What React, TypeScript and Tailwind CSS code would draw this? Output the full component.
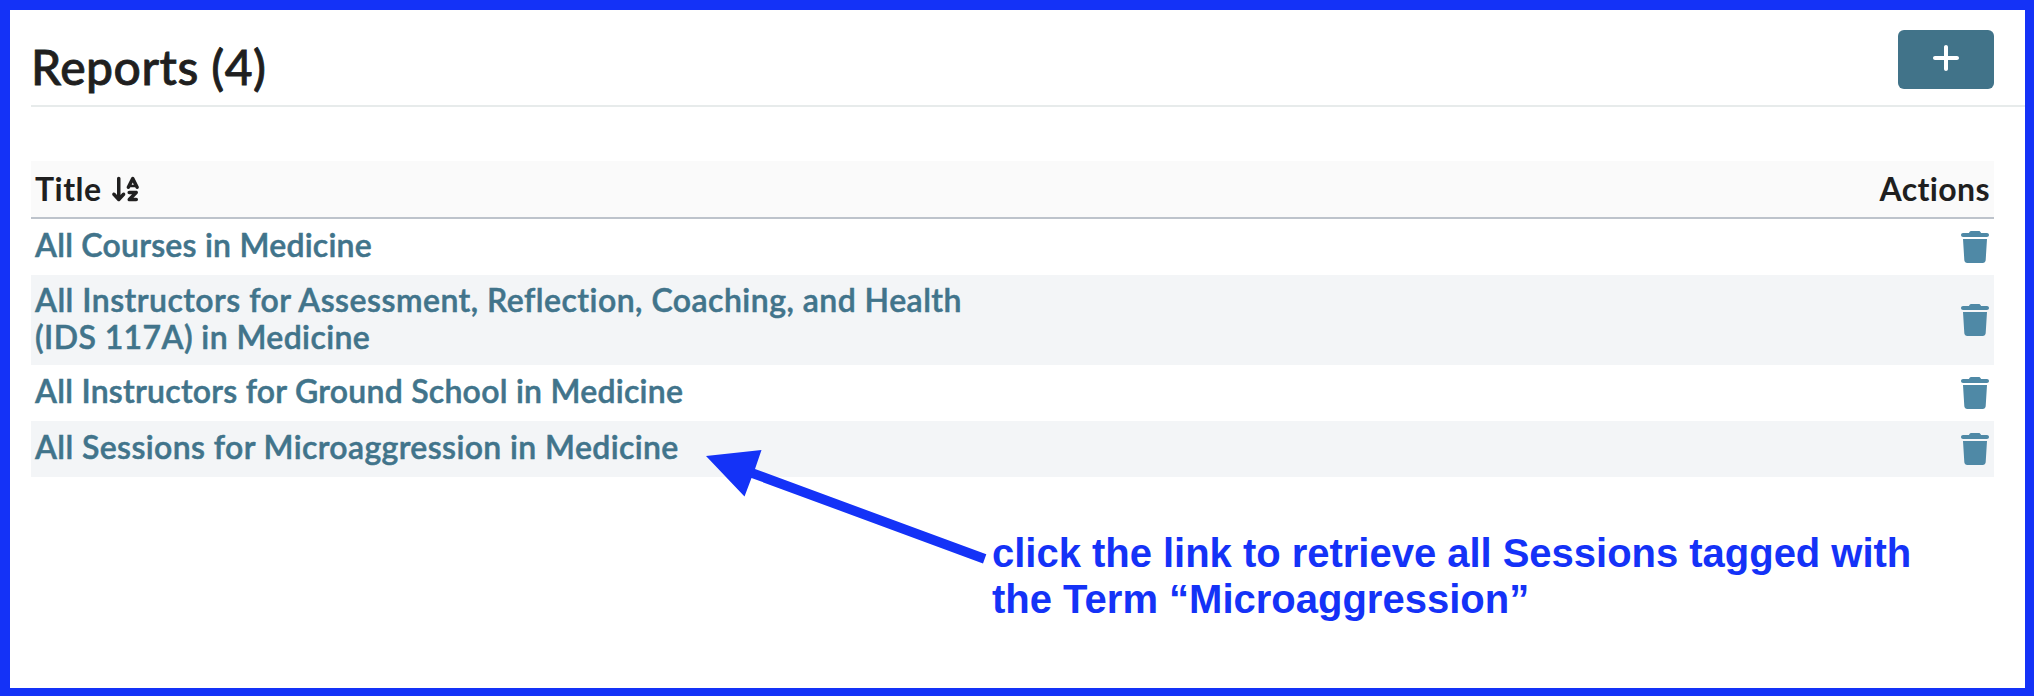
import { FaArrowDownAZ, FaPlus, FaTrash } from "react-icons/fa6";

interface Report {
  lines: { text: string; tracking: string }[];
  row: string;
  link: string;
}

const reports: Report[] = [
  {
    lines: [{ text: "All Courses in Medicine", tracking: "tracking-[0.23px]" }],
    row: "h-[56px] bg-white",
    link: "mt-[7px]",
  },
  {
    lines: [
      {
        text: "All Instructors for Assessment, Reflection, Coaching, and Health",
        tracking: "tracking-[0.47px]",
      },
      { text: "(IDS 117A) in Medicine", tracking: "tracking-[0.4px]" },
    ],
    row: "h-[90px] bg-[#f3f5f7]",
    link: "mt-[6px]",
  },
  {
    lines: [{ text: "All Instructors for Ground School in Medicine", tracking: "tracking-[0.25px]" }],
    row: "h-[56px] bg-white",
    link: "mt-[7px]",
  },
  {
    lines: [{ text: "All Sessions for Microaggression in Medicine", tracking: "tracking-[0.38px]" }],
    row: "h-[56px] bg-[#f3f5f7]",
    link: "mt-[7px]",
  },
];

function ReportRow({ report }: { report: Report }) {
  return (
    <li className={`flex justify-between pr-[5px] pl-[4px] ${report.row}`}>
      <a
        className={`text-[32px] leading-[37px] font-semibold whitespace-nowrap text-[#41748b] [-webkit-text-stroke:0.5px_#41748b] ${report.link}`}
      >
        {report.lines.map((line) => (
          <span key={line.text} className={`block ${line.tracking}`}>
            {line.text}
          </span>
        ))}
      </a>
      <button className="flex items-center" aria-label="Delete">
        <FaTrash className="h-8 w-7 text-[#4f89a6]" />
      </button>
    </li>
  );
}

export default function App() {
  return (
    <div className="relative h-[696px] w-[2034px] overflow-hidden border-t-[10px] border-r-[9px] border-b-[8px] border-l-[10px] border-[#1432f7] bg-white font-[Lato,sans-serif] text-[#201f1f]">
      <header className="ml-[21px] flex h-[97px] justify-between border-b-2 border-[#e7ebeb] pr-[31px]">
        <h1 className="mt-[29px] text-[48px] leading-[56px] font-medium tracking-[0.5px] [-webkit-text-stroke:0.8px_#201f1f]">
          Reports (4)
        </h1>
        <button
          className="mt-[20px] flex h-[59px] w-[96px] justify-center rounded-[6px] bg-[#417389] pt-[12px] text-white"
          aria-label="Add"
        >
          <FaPlus className="h-8 w-7" />
        </button>
      </header>

      <main className="mt-[54px] mr-[31px] ml-[21px]">
        <div className="flex h-[58px] justify-between border-b-2 border-[#bdc3cb] bg-[#fafafa] pt-[9px] pr-[4px] pl-[4px] text-[32px] leading-[37px] font-bold">
          <div className="flex">
            <span className="tracking-[0.5px]">Title</span>
            <FaArrowDownAZ className="mt-[5px] ml-[8px] h-[28px] w-[31.5px]" />
          </div>
          <span className="tracking-[0.4px]">Actions</span>
        </div>
        <ul>
          {reports.map((report) => (
            <ReportRow key={report.lines[0].text} report={report} />
          ))}
        </ul>
      </main>

      <svg
        className="absolute top-[430px] left-[690px] h-[140px] w-[300px]"
        viewBox="700 440 300 140"
        fill="#1432f7"
      >
        <path d="M706 456 L761.5 450 L755 469 L986.3 554.3 L983 563.5 L751.5 478 L744.5 496.5 Z" />
      </svg>
      <p className="absolute top-[520px] left-[982px] font-['Liberation_Sans',sans-serif] text-[40px] leading-[46px] font-bold whitespace-nowrap text-[#1432f7]">
        <span className="block tracking-[-0.02px]">click the link to retrieve all Sessions tagged with</span>
        <span className="block">the Term “Microaggression”</span>
      </p>
    </div>
  );
}
